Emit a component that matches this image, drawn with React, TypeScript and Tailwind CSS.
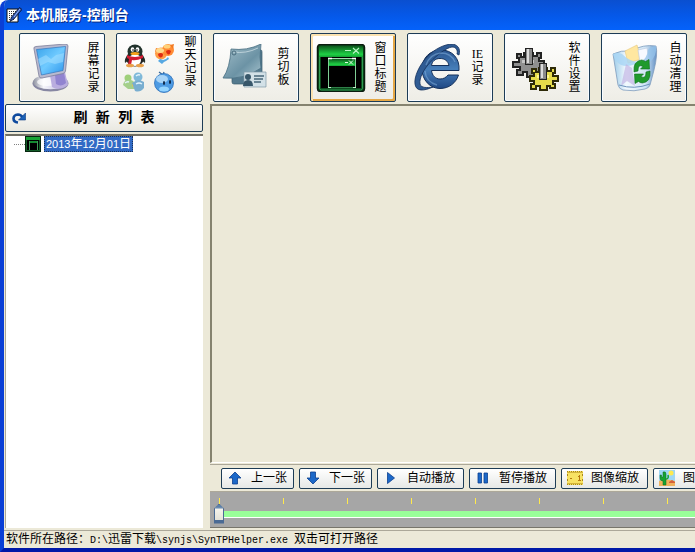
import React, { useState, type JSX } from "react";

type Tool = {
  id: string;
  label: string;
  icon: JSX.Element;
  labelClass: string;
};

function AppIcon() {
  return (
    <svg className="w-4 h-4 shrink-0" viewBox="0 0 16 16">
      <path d="M1 2h11v13H1z" fill="#fff" stroke="#111" />
      <path d="M3 4.5h7M3 6.5h6M3 8.5h4M3 10.5h3M3 12.5h5" stroke="#333" strokeDasharray="1 1" />
      <path d="M13.500 0.500L16 2.500 8 12l-4 2.500L5.500 10z" fill="#2c4fa8" stroke="#0b1433" strokeWidth="0.8" />
      <path d="M14 2L8 10" stroke="#9fc0ff" />
    </svg>
  );
}

function MonitorIcon() {
  return (
    <svg className="w-12 h-12" viewBox="0 0 48 48">
      <defs>
        <linearGradient id="screen" x1="0" y1="0" x2="1" y2="1">
          <stop offset="0" stopColor="#3aa3ea" />
          <stop offset="0.5" stopColor="#6fcaff" />
          <stop offset="1" stopColor="#2b93ea" />
        </linearGradient>
        <linearGradient id="base" x1="0" y1="0" x2="1" y2="0">
          <stop offset="0" stopColor="#8f93a0" />
          <stop offset="0.3" stopColor="#f6f6fb" />
          <stop offset="1" stopColor="#b3b0d8" />
        </linearGradient>
      </defs>
      <ellipse cx="25.5" cy="39.500" rx="18" ry="8" fill="#8787a2" />
      <ellipse cx="25.5" cy="38" rx="17.3" ry="7.3" fill="url(#base)" />
      <ellipse cx="22" cy="38" rx="10" ry="4" fill="#fff" opacity="0.7" />
      <path d="M25 31l15-3 3 13c-4 4-11 5-16 2z" fill="#b9addf" />
      <path d="M30 31l9-2 2 10c-3 3-7 3-10 1z" fill="#9184d0" />
      <path d="M9 5Q8 3 11 2.500L40 0Q43 0 43 2L40.500 27Q40.300 29 38 29.500L17 34Q14.500 34.500 14 32z" fill="#b9bacf" stroke="#7d7f9a" strokeWidth="0.8" />
      <path d="M11.500 5.500L40.500 2.500L38 26.500L16.500 31z" fill="url(#screen)" stroke="#3576bb" strokeWidth="0.7" />
      <path d="M13 15l8-4 5 4 5-4 8-2-1 9-8 2-7-2-8 4z" fill="#a9e1ff" opacity="0.5" />
    </svg>
  );
}

function ChatIcons() {
  return (
    <svg className="w-[52px] h-[50px]" viewBox="0 0 52 50">
      {/* penguin */}
      <path d="M6 11Q2 16 3 20l4-3h12l4 3q1-4-3-9z" fill="#26302c" />
      <ellipse cx="13" cy="16" rx="8.5" ry="7.5" fill="#222" />
      <ellipse cx="13" cy="8.5" rx="7.5" ry="7" fill="#22332c" />
      <ellipse cx="13" cy="17" rx="6" ry="6" fill="#fff" />
      <ellipse cx="10.5" cy="6.5" rx="1.8" ry="2.3" fill="#fff" />
      <ellipse cx="15.5" cy="6.5" rx="1.8" ry="2.3" fill="#fff" />
      <circle cx="11" cy="7" r="0.8" />
      <circle cx="15" cy="7" r="0.8" />
      <ellipse cx="13" cy="10.5" rx="4.5" ry="1.6" fill="#f5a21b" />
      <path d="M5 12q8 4 16 0v3q-7 3-11 2l-1 5H6l1-6-2-1z" fill="#d21c33" />
      <ellipse cx="8" cy="22.5" rx="4" ry="1.8" fill="#e8a04a" />
      <ellipse cx="18" cy="22.5" rx="4" ry="1.8" fill="#e8a04a" />
      {/* orange twins */}
      <circle cx="39" cy="10.500" r="6" fill="#ff9d45" />
      <circle cx="46" cy="7" r="6" fill="#ff8c35" />
      <path d="M48 2l4-1-1 5zM33 9l1-4 3 1z" fill="#f27a22" />
      <ellipse cx="38" cy="7.500" rx="4" ry="2.500" fill="#ffd98c" />
      <ellipse cx="45" cy="3.500" rx="3.500" ry="2" fill="#ffd27a" />
      <path d="M36 11q3-2 5 0 0 4-3 3.500-2-1-2-3.500zM44 8q3-2 5 0-1 4-3 3.500-2-1-2-3.500z" fill="#e02c12" />
      <path d="M36 18l2-2 3 1 3-1 2-2 1 2-3 2-2 1-2 2z" fill="#58a9e2" />
      {/* two buddies */}
      <circle cx="6" cy="35" r="3.5" fill="#9fd07a" />
      <path d="M1 42q1-6 8-5 5 1 4 9H6z" fill="#a5cf8b" />
      <circle cx="12" cy="42" r="2" fill="#f2c744" />
      <circle cx="16" cy="34" r="4.500" fill="#7fb9d9" />
      <path d="M10 40q6-5 12-1v6q-4 5-9 3z" fill="#79aed0" />
      <path d="M14 33q2-2 4-1M3 40q2-2 4-1M14 41q3-2 6 0" stroke="#e2f3fb" strokeWidth="1.4" fill="none" />
      {/* blue drop */}
      <path d="M41 32l-4-3M41 32l1-3" stroke="#35699a" strokeWidth="1.3" />
      <circle cx="42" cy="40" r="9.5" fill="#4d9be3" stroke="#2c6fb7" strokeWidth="0.8" />
      <ellipse cx="40" cy="36" rx="6" ry="4" fill="#bfe2fb" opacity="0.8" />
      <ellipse cx="42" cy="46" rx="5" ry="2.5" fill="#93d4ff" />
      <ellipse cx="42" cy="40" rx="1" ry="2" fill="#0c2340" />
      <ellipse cx="48" cy="39" rx="1" ry="2" fill="#0c2340" />
    </svg>
  );
}

function ClipboardIcon() {
  return (
    <svg className="w-12 h-12" viewBox="0 0 48 48">
      <defs>
        <linearGradient id="sheet" x1="0" y1="0" x2="1" y2="1">
          <stop offset="0" stopColor="#a3bfca" />
          <stop offset="0.6" stopColor="#6c93a5" />
          <stop offset="1" stopColor="#a9c5cf" />
        </linearGradient>
      </defs>
      <path d="M14 6h28q1 0 1 2v30q0 2-2 2H15q-2 0-2-2V8z" fill="#547a8e" stroke="#3b5d6f" strokeWidth="0.7" />
      <path d="M12 5Q28 7 42 0Q40 14 42 24Q25 36 4 34Q11 24 12 5z" fill="url(#sheet)" stroke="#4a7083" strokeWidth="0.8" />
      <path d="M14 8q13 2 25-4" stroke="#cbdde3" strokeWidth="0.8" fill="none" />
      <circle cx="15" cy="9" r="2" fill="none" stroke="#496c7e" />
      <path d="M25 28h22v15H25z" fill="#d3e1e7" stroke="#7f9aa7" strokeWidth="0.7" />
      <circle cx="29" cy="33" r="3" fill="#38576a" />
      <path d="M24 42q0-6 5-6t5 6z" fill="#38576a" />
      <path d="M35 32h10M35 35h9M35 38h7" stroke="#48677a" strokeWidth="1.3" />
    </svg>
  );
}

function WindowIcon() {
  return (
    <svg className="w-[50px] h-12" viewBox="0 0 50 48">
      <defs>
        <linearGradient id="greenBar" x1="0" y1="0" x2="0" y2="1">
          <stop offset="0" stopColor="#0b5a1c" />
          <stop offset="0.75" stopColor="#1fd045" />
          <stop offset="1" stopColor="#14a035" />
        </linearGradient>
      </defs>
      <rect x="1.5" y="0.5" width="47" height="47" rx="3" fill="#0b4a1c" stroke="#0a1c0e" strokeWidth="1.500" />
      <path d="M3 4q0-2 2-2h40q2 0 2 2v9H3z" fill="url(#greenBar)" />
      <path d="M3.500 13v31q0 2 2 2h39q2 0 2-2V13" fill="none" stroke="#2f9a50" />
      <path d="M5 13h40v31H5z" fill="#000" />
      <path d="M29 6.500h6M37 4l6 5.500M43 4l-6 5.500" stroke="#b9f5c5" strokeWidth="1.1" />
      <path d="M13 15h26v7H13z" fill="url(#greenBar)" />
      <path d="M12.500 15v29M39.500 15v29" stroke="#7fcf95" />
      <path d="M12 14.500h4M36 14.500h4" stroke="#fff" strokeWidth="1.500" />
      <path d="M16 14.500h20" stroke="#a5dbb3" />
      <path d="M29 18.500h3M33 16.500l4 4M37 16.500l-4 4" stroke="#e0ffe6" />
      <path d="M12 43.500h3M37 43.500h3" stroke="#c9f2d3" />
      <path d="M15 43.500h22" stroke="#2f7f48" />
    </svg>
  );
}

function SmallWindowIcon() {
  return (
    <svg className="w-4 h-4 shrink-0" viewBox="0 0 16 16" shapeRendering="crispEdges">
      <path d="M0 0h16v16H0z" fill="#06280f" />
      <path d="M1 1h14v3H1z" fill="#17a335" />
      <path d="M1 4h1v11H1zM14 4h1v11h-1zM1 14h14v1H1z" fill="#135c28" />
      <path d="M2 4h12v10H2z" fill="#000" />
      <path d="M4 5h9v2H4z" fill="#158a30" />
      <path d="M4 5h1v9H4zM12 5h1v9h-1z" fill="#3f9a57" />
    </svg>
  );
}

function ExplorerIcon() {
  return (
    <svg className="w-12 h-12" viewBox="0 0 48 48">
      <defs>
        <linearGradient id="eBlue" x1="0" y1="0" x2="0" y2="1">
          <stop offset="0" stopColor="#2a5590" />
          <stop offset="0.5" stopColor="#477fba" />
          <stop offset="1" stopColor="#1f4884" />
        </linearGradient>
      </defs>
      <path
        d="M46 26.500H18.500c.5 5 4 8.500 8.500 8.500 3.500 0 6-1.500 8-4h10.500C43 39 36 44.500 27 44.500 17 44.500 9 36 9 25S17 6 28 6c11 0 19 8 18 20.500zM18.500 21.500H36c-1-4.500-4-7-9-7s-8 3-8.500 7z"
        fill="url(#eBlue)"
        stroke="#14305a"
        fillRule="evenodd"
      />
      <path
        d="M46 11C48 4 44 0 38 0 30 1 22 5 15 12 6 21 1 33 2 40c1 8 9 7 18 3-6 1-12 1-13-3-1-6 4-15 10-21.500C25 10 33 4 39 3c4 0 6 3 5 7z"
        fill="#2f5b93"
        stroke="#14305a"
        strokeWidth="0.8"
      />
      <path d="M13 21q4-11 15-12 10 0 14 9M12 27q1 11 12 14" stroke="#86b4e0" strokeWidth="1.4" fill="none" opacity="0.5" />
    </svg>
  );
}

function GearsIcon() {
  return (
    <svg className="w-[50px] h-12" viewBox="0 0 50 48" shapeRendering="crispEdges">
      <path
        d="M7 10h4v3h3V9h9v3h4V9h4v5h-2v3h5v6h-4v3h3v4h-5v-2h-4v5h-7v-5h-4v3H7v-5h3v-3H3v-5h6v-4H7z"
        fill="#8f8f8f"
        stroke="#222"
        strokeWidth="1.4"
      />
      <path d="M12 16h12v3H12z" fill="#c4c4c4" />
      <path d="M15 4h7v16h-7z" fill="#8a8a8a" stroke="#222" />
      <path d="M17 5h2v14h-2z" fill="#dcdcdc" />
      <path
        d="M22 25h4v3h3v-4h8v3h4v-3h4v5h-2v3h5v5h-5v3h2v4h-5v-2h-3v4h-7v-4h-4v3h-5v-5h3v-3h-4v-5h4v-3h-2z"
        fill="#e6dc4b"
        stroke="#2e2a08"
        strokeWidth="1.4"
      />
      <path d="M27 31h12v3H27z" fill="#fff78d" />
      <path d="M29 19h7v16h-7z" fill="#8a8a8a" stroke="#222" />
      <path d="M31 20h2v14h-2z" fill="#dcdcdc" />
    </svg>
  );
}

function RecycleBinIcon() {
  return (
    <svg className="w-[52px] h-12" viewBox="0 0 52 48">
      <defs>
        <linearGradient id="glass" x1="0" y1="0" x2="1" y2="0">
          <stop offset="0" stopColor="#9ccbe8" />
          <stop offset="0.3" stopColor="#f2f9fe" />
          <stop offset="0.75" stopColor="#cfe5f5" />
          <stop offset="1" stopColor="#6490c4" />
        </linearGradient>
      </defs>
      <path d="M6 10Q14 6 24 7Q36 0 49 2Q51 10 47 26L43 41Q42 44 38 45Q27 48 16 46Q12 45 11 41z" fill="url(#glass)" stroke="#7f9cbd" strokeWidth="0.8" />
      <path d="M18 7l12-6 4 14-13 4z" fill="#ffe7a0" stroke="#e5c77a" strokeWidth="0.6" />
      <path d="M31 6l9-2 2 12-9 2z" fill="#f7f9ff" stroke="#b9c8de" strokeWidth="0.6" />
      <path d="M6 10q4-2 9 0 8 8 17 8-10 6-18 3Q8 18 6 10z" fill="#a9d6f4" opacity="0.85" />
      <path d="M41 6q3-4 8-4 1 10-6 16-6 2-10 0 7-3 8-12z" fill="#93c2ea" opacity="0.8" />
      <path d="M19 20l6 4 3 18-8-5-6 5z" fill="#c3b7e4" opacity="0.7" />
      <path d="M12 41q15 5 31-1" stroke="#6d93bd" fill="none" />
      <path d="M27 28Q26 17 34.500 16q2 0 4 1.500l3.500-2 .5 9.500h-9l2.500-2.500q-5-3-5 4.500z" fill="#1f9a2c" stroke="#0f6d1c" strokeWidth="0.6" />
      <path d="M43 27q1 11-7.500 12-2 0-4-1.500l-3.500 2-.5-9.500h9L34 32.500q5 3 5-4.500z" fill="#1f9a2c" stroke="#0f6d1c" strokeWidth="0.6" />
    </svg>
  );
}

function ArrowIcon({ down = false }: { down?: boolean }) {
  return (
    <svg className="w-3 h-3.5" viewBox="0 0 12 14">
      <path
        d={down ? "M3.5 1h5v6H12l-6 6-6-6h3.5z" : "M3.5 13h5V7H12L6 1 0 7h3.5z"}
        fill="#1c68c8"
        stroke="#0b3f8f"
        strokeWidth="0.8"
      />
    </svg>
  );
}

function PlayIcon() {
  return (
    <svg className="w-2 h-3" viewBox="0 0 8 12">
      <path d="M0.5 0.5L7.5 6l-7 5.5z" fill="#1c68c8" stroke="#0b3f8f" strokeWidth="0.8" />
    </svg>
  );
}

function PauseIcon() {
  return (
    <svg className="w-3 h-3" viewBox="0 0 12 12">
      <path d="M1 1h3.5v10H1zM7 1h3.5v10H7z" fill="#1c68c8" stroke="#0b3f8f" strokeWidth="0.8" />
    </svg>
  );
}

function ZoomStripIcon() {
  return (
    <svg className="w-4 h-4" viewBox="0 0 16 16" shapeRendering="crispEdges">
      <path d="M0 1h16v14H0z" fill="#f7e263" />
      <path d="M0 1.5h16M0 14.5h16" stroke="#a8861b" strokeDasharray="1 1" />
      <path d="M0 2h16v1H0zM0 13h16v1H0z" fill="#d3b43a" />
      <path d="M0 4h1v2H0zM0 9h1v2H0zM15 4h1v2h-1zM15 9h1v2h-1z" fill="#a8861b" />
      <path d="M3 8h2v1H3zM12 5h1v5h1v1h-3v-1h1V7h-1V6h1z" fill="#b5780e" />
    </svg>
  );
}

function PictureIcon() {
  return (
    <svg className="w-4 h-4" viewBox="0 0 16 16">
      <path d="M0 0h16v16H0z" fill="#9fd7f5" />
      <path d="M0 11l6-2 10 2v5H0z" fill="#f0b25c" />
      <circle cx="12" cy="3" r="2.5" fill="#ffe94d" />
      <path d="M4 2q3-1 3 2v11H4v-4Q1 11 1 8V5h1.500v2H4z" fill="#17a232" stroke="#0d6f20" strokeWidth="0.5" />
      <path d="M7 9q3 0 2-4" stroke="#17a232" strokeWidth="1.5" fill="none" />
      <path d="M10 12l3-2 3 2v1h-6z" fill="#d4603a" />
    </svg>
  );
}

function RefreshIcon() {
  return (
    <svg className="w-3.5 h-3 shrink-0" viewBox="0 0 14 12">
      <path d="M6 10.500Q1.500 10 1.500 6.500T6 2.500q3 0 4.500 3" stroke="#0f4a9e" strokeWidth="2.600" fill="none" />
      <path d="M13.500 1v7H6.500z" fill="#1c62b8" stroke="#0b3a80" strokeWidth="0.6" />
    </svg>
  );
}

// Latin runs take half the width of a Chinese character
function MixedText({ text, latinClass }: { text: string; latinClass: string }) {
  return (
    <>
      {text.split(/([\x20-\x7e]+)/).map((part, i) =>
        i % 2 ? (
          <span key={i} className={latinClass}>
            {part}
          </span>
        ) : (
          part
        )
      )}
    </>
  );
}

const tools: Tool[] = [
  { id: "screen", label: "屏幕记录", icon: <MonitorIcon />, labelClass: "mr-1" },
  { id: "chat", label: "聊天记录", icon: <ChatIcons />, labelClass: "mr-1 self-start mt-0.5" },
  { id: "clipboard", label: "剪切板", icon: <ClipboardIcon />, labelClass: "mr-2" },
  { id: "window", label: "窗口标题", icon: <WindowIcon />, labelClass: "mr-2" },
  { id: "ie", label: "IE记录", icon: <ExplorerIcon />, labelClass: "mr-2" },
  { id: "settings", label: "软件设置", icon: <GearsIcon />, labelClass: "mr-2" },
  { id: "clean", label: "自动清理", icon: <RecycleBinIcon />, labelClass: "mr-1" },
];

const playerButtons = [
  { label: "上一张", icon: <ArrowIcon />, size: "w-[73px]" },
  { label: "下一张", icon: <ArrowIcon down />, size: "w-[73px]" },
  { label: "自动播放", icon: <PlayIcon />, size: "w-[87px]" },
  { label: "暂停播放", icon: <PauseIcon />, size: "w-[87px]" },
  { label: "图像缩放", icon: <ZoomStripIcon />, size: "w-[87px]" },
  { label: "图", icon: <PictureIcon />, size: "w-[87px]" },
];

export default function App(): JSX.Element {
  const [activeTool, setActiveTool] = useState("window");
  const [position, setPosition] = useState(0);

  return (
    <div className="min-h-screen flex flex-col overflow-hidden rounded-tl-lg bg-[#ece9d8] border-l-4 border-b-4 border-l-[#0a3fd6] border-b-[#0019a8] text-xs text-black font-['Liberation_Sans','Noto_Sans_CJK_SC',sans-serif]">
      {/* Title bar */}
      <header className="h-[30px] shrink-0 -ml-1 pl-1.5 flex items-center gap-1 bg-linear-to-b from-[#0a4fd0] via-[#0558e8] to-[#0462fb]">
        <AppIcon />
        <h1 className="text-sm leading-4 font-bold text-white whitespace-nowrap [text-shadow:1px_1px_#0a2a80]">
          本机服务-控制台
        </h1>
      </header>

      {/* Toolbar */}
      <nav className="flex shrink-0 gap-[11px] pl-[15px] pt-[3px] pb-0.5 overflow-hidden">
        {tools.map((tool) => (
          <button
            key={tool.id}
            type="button"
            onClick={() => setActiveTool(tool.id)}
            className={`w-[86px] h-[69px] shrink-0 flex items-center justify-between pl-[5px] rounded-xs border border-[#1d3c56] bg-linear-to-b from-white to-[#eeede6] ${
              activeTool === tool.id
                ? "shadow-[inset_2px_2px_#fbe3b0,inset_-2px_-2px_#e5a846]"
                : "shadow-[inset_0_0_0_1px_#f8fcff,inset_-1px_-1px_#dcdfd8]"
            }`}
          >
            {tool.icon}
            <span className={`w-[13px] -ml-1 shrink-0 leading-[13px] break-all text-center ${tool.labelClass}`}>
              <MixedText text={tool.label} latinClass="font-['Liberation_Serif',serif]" />
            </span>
          </button>
        ))}
      </nav>

      <main className="flex-1 flex min-h-0">
        {/* Record list */}
        <aside className="w-[199px] shrink-0 flex flex-col gap-0.5 pl-px">
          <button
            type="button"
            className="h-7 shrink-0 flex items-center pl-1.5 rounded-xs border border-[#1d3c56] bg-linear-to-b from-white to-[#e9e8e0]"
          >
            <RefreshIcon />
            <span className="flex-1 text-center text-sm leading-4 font-bold font-['Liberation_Mono','Noto_Sans_CJK_SC',monospace]">
              刷 新 列 表
            </span>
          </button>
          <ul className="flex-1 bg-white border-t-2 border-t-[#716f64] border-l border-l-[#aca899] pl-2">
            <li className="flex items-center">
              <span className="w-[11px] shrink-0 border-t border-dotted border-[#808080]" />
              <SmallWindowIcon />
              <button
                type="button"
                className="ml-[3px] px-px h-4 leading-[14px] whitespace-nowrap bg-[#316ac5] text-white border border-dotted border-[#1a2f55]"
              >
                <MixedText text="2013年12月01日" latinClass="text-[11px]" />
              </button>
            </li>
          </ul>
        </aside>

        {/* Viewer */}
        <section className="flex-1 min-w-0 flex flex-col ml-[7px]">
          <div className="flex-1 border-t-2 border-l-2 border-[#85836f] border-b border-b-white" />
          <div className="h-7 mt-px shrink-0 flex items-center gap-[5px] pl-[11px] overflow-hidden border-t border-b border-[#aca899]">
            {playerButtons.map((b) => (
              <button
                key={b.label}
                type="button"
                className={`${b.size} h-[21px] shrink-0 flex items-center gap-2 pl-[5px] rounded-xs border border-[#1d3c56] bg-linear-to-b from-white to-[#e6e8e6]`}
              >
                <span className="w-4 shrink-0 flex justify-center">{b.icon}</span>
                <span className="leading-4 whitespace-nowrap">{b.label}</span>
              </button>
            ))}
          </div>
          <div className="h-9 shrink-0 pl-1 pt-1.5 overflow-hidden bg-[#a6a6a6] border-b border-b-[#77756b]">
            <div className="flex gap-[63px] pl-[5px]">
              {Array.from({ length: 8 }, (_, i) => (
                <span key={i} className="w-px h-1.5 shrink-0 bg-[#ffe94a]" />
              ))}
            </div>
            <input
              type="range"
              aria-label="播放进度"
              min={0}
              max={100}
              value={position}
              onChange={(e) => setPosition(Number(e.target.value))}
              className="block w-full h-5 appearance-none bg-transparent [&::-webkit-slider-runnable-track]:h-[7px] [&::-webkit-slider-runnable-track]:bg-[#99ff99] [&::-webkit-slider-runnable-track]:border-b [&::-webkit-slider-runnable-track]:border-white [&::-webkit-slider-thumb]:appearance-none [&::-webkit-slider-thumb]:-mt-[7px] [&::-webkit-slider-thumb]:w-2.5 [&::-webkit-slider-thumb]:h-5 [&::-webkit-slider-thumb]:bg-linear-to-b [&::-webkit-slider-thumb]:from-[#5c7fa8] [&::-webkit-slider-thumb]:from-15% [&::-webkit-slider-thumb]:via-[#f4f2ea] [&::-webkit-slider-thumb]:via-30% [&::-webkit-slider-thumb]:to-[#e4e2d8] [&::-webkit-slider-thumb]:border [&::-webkit-slider-thumb]:border-b-4 [&::-webkit-slider-thumb]:border-[#4a6a94] [&::-webkit-slider-thumb]:[clip-path:polygon(50%_0,100%_25%,100%_100%,0_100%,0_25%)]"
            />
          </div>
        </section>
      </main>

      {/* Status bar */}
      <footer className="h-[18px] mt-0.5 shrink-0 pl-0.5 border-t border-t-[#aca899] leading-[17px] whitespace-pre overflow-hidden">
        <MixedText
          text="软件所在路径：D:\迅雷下载\synjs\SynTPHelper.exe 双击可打开路径"
          latinClass="text-[10px] font-['Liberation_Mono',monospace]"
        />
      </footer>
    </div>
  );
}
